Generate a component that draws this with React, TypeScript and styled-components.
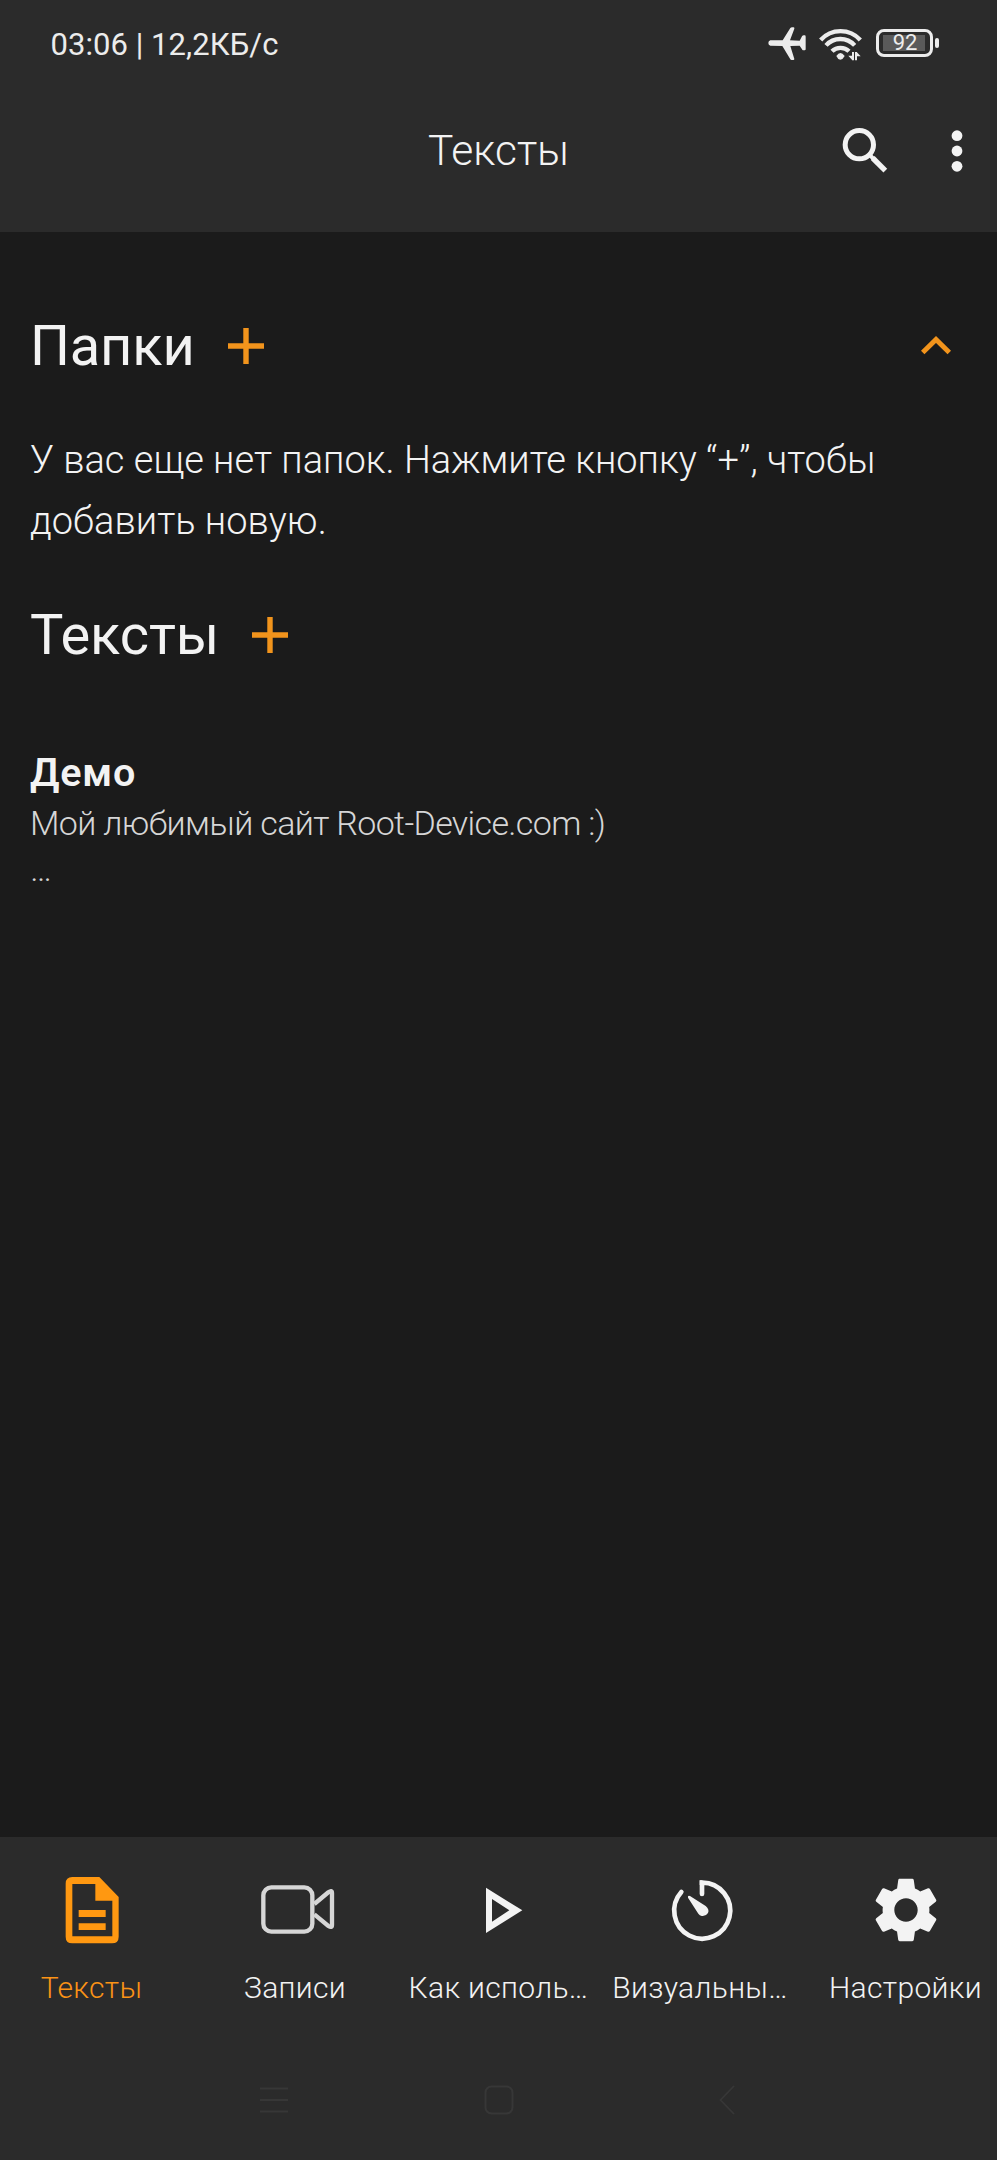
import React from 'react';
import styled, { createGlobalStyle } from 'styled-components';
import { MdSettings } from 'react-icons/md';

const color = {
  bar: '#2b2b2b',
  page: '#1b1b1b',
  text: '#f3f3f3',
  muted: '#d6d6d6',
  accent: '#fb9316',
  plus: '#f2941c',
  ghost: '#373737',
};

const GlobalStyle = createGlobalStyle`
  *, *::before, *::after { box-sizing: border-box; }
  body { margin: 0; background: ${color.page}; }
`;

const Screen = styled.div`
  width: 997px;
  height: 2160px;
  display: flex;
  flex-direction: column;
  overflow: hidden;
  background: ${color.page};
  color: ${color.text};
  font-family: Roboto, 'Noto Sans', sans-serif;
  svg { display: block; flex: none; }
`;

const Header = styled.header`
  flex: none;
  height: 232px;
  background: ${color.bar};
`;

const StatusBar = styled.div`
  height: 90px;
  padding: 0 58px 0 50.5px;
  display: flex;
  align-items: center;
  justify-content: space-between;
`;

const Clock = styled.span`
  font-size: 31px;
  line-height: 36px;
  letter-spacing: 0.06px;
  color: #ececec;
  white-space: nowrap;
`;

const StatusIcons = styled.div`
  display: flex;
  align-items: center;
  padding-bottom: 4px;
`;

const Connectivity = styled.div`
  display: flex;
  gap: 12px;
  padding-top: 1px;
`;

const Battery = styled.div`
  display: flex;
  align-items: center;
  gap: 2px;
  margin-left: 13px;
`;

const BatteryShell = styled.div`
  width: 57px;
  height: 28px;
  padding: 3px 4px;
  border: 3.5px solid #ececec;
  border-radius: 8px;
`;

const BatteryLevel = styled.div`
  height: 100%;
  width: 42px;
  background: #5a5a5a;
  display: flex;
  align-items: center;
  justify-content: center;
  font-size: 22px;
  line-height: 16px;
  color: #ececec;
  padding-left: 2px;
`;

const BatteryTip = styled.div`
  width: 4px;
  height: 10px;
  border-radius: 2px;
  background: #ececec;
`;

const TitleBar = styled.div`
  height: 121px;
  display: grid;
  grid-template-columns: 1fr auto 1fr;
  align-items: center;
`;

const Title = styled.h1`
  grid-column: 2;
  margin: 0;
  font-size: 42.5px;
  font-weight: 300;
  line-height: 50px;
`;

const Actions = styled.div`
  display: flex;
  justify-content: flex-end;
  align-items: center;
  gap: 63px;
  padding-right: 34.5px;
`;

const SearchButton = styled.div`
  padding-bottom: 2px;
`;

const Main = styled.main`
  flex: 1;
  padding: 58px 30px 0 30px;
`;

const SectionHead = styled.div`
  height: 112px;
  display: flex;
  align-items: center;
`;

const SectionTitle = styled.h2<{ $gap: number }>`
  margin: 0 ${p => p.$gap}px 0 0;
  font-size: 56px;
  font-weight: 400;
  line-height: 66px;
  letter-spacing: -0.15px;
`;

const CollapseButton = styled.div`
  margin-left: auto;
  margin-right: 16px;
`;

const Hint = styled.p`
  margin: 28px 0 28px;
  font-size: 38px;
  font-weight: 300;
  line-height: 60.5px;
  letter-spacing: 0.02px;
`;

const Note = styled.article`
  margin-top: 57px;
`;

const NoteTitle = styled.h3`
  margin: 0 0 2px;
  font-size: 39.5px;
  font-weight: 600;
  line-height: 50px;
  letter-spacing: 0.8px;
`;

const NoteText = styled.div`
  font-size: 34px;
  font-weight: 300;
  line-height: 46px;
  letter-spacing: -0.65px;
  color: ${color.muted};
`;

const TabBar = styled.nav`
  flex: none;
  height: 202px;
  background: ${color.bar};
  display: grid;
  grid-template-columns: repeat(5, 203.5px);
  justify-content: center;
`;

const Tab = styled.div<{ $active?: boolean }>`
  display: flex;
  flex-direction: column;
  align-items: center;
  padding-top: 28px;
  color: ${p => (p.$active ? color.accent : color.text)};
`;

const TabIcon = styled.div`
  width: 90px;
  height: 90px;
  display: flex;
  align-items: center;
  justify-content: center;
`;

const TabLabel = styled.span<{ $shift?: number }>`
  margin-top: 15px;
  font-size: 30px;
  font-weight: 300;
  line-height: 36px;
  letter-spacing: 0.35px;
  white-space: nowrap;
  padding-right: ${p => p.$shift ?? 0}px;
`;

const SystemBar = styled.div`
  flex: none;
  height: 121px;
  background: ${color.bar};
  display: flex;
  align-items: center;
  padding-left: 260px;
`;

const SystemKey = styled.div<{ $gap?: number }>`
  margin-right: ${p => p.$gap ?? 0}px;
`;

const Airplane = () => (
  <svg width="40" height="36" viewBox="80 77 120 108" fill="#ececec">
    <path d="M90 120H127L150 83Q152 81 155 81H160Q163 82 162 85L149 120L178 121L185 108Q187 105 190 105H194Q196 106 196 109V147Q196 150 193 150H188Q186 150 185 147L178 136L150 137L162 176Q162 179 159 179H154Q151 179 150 177L126 137L90 136Q84 134 84 128Q84 122 90 120Z" />
  </svg>
);

const Wifi = () => (
  <svg width="44" height="36" viewBox="238 77 132 108" fill="none" stroke="#ececec" strokeWidth="13">
    <path d="M243 119A80 80 0 0 1 362 119M259 135A58 58 0 0 1 345 135M277 153A36 36 0 0 1 328 153" />
    <path d="M290 167Q302 149 315 167Q310 177 302 178Q294 177 290 167Z" fill="#ececec" stroke="none" />
    <path d="M340 155V180M349 180V155" strokeWidth="6" />
    <path d="M326 166H338V180ZM363 168H351V155Z" fill="#ececec" stroke="none" />
  </svg>
);

const SearchIcon = () => (
  <svg width="46" height="46" viewBox="304 379 138 138" fill="none" stroke={color.text}>
    <circle cx="356" cy="432" r="42.5" strokeWidth="15" />
    <path d="M387 463L398 474" strokeWidth="12" />
    <path d="M396 472L434 510" strokeWidth="16" />
  </svg>
);

const MoreIcon = () => (
  <svg width="12" height="42" viewBox="0 0 12 42" fill={color.text}>
    <circle cx="6" cy="5.7" r="5.4" />
    <circle cx="6" cy="21" r="5.4" />
    <circle cx="6" cy="36.3" r="5.4" />
  </svg>
);

const PlusIcon = () => (
  <svg width="36" height="36" viewBox="0 0 36 36" stroke={color.plus} strokeWidth="5.4">
    <path d="M0 18H36M18 0V36" />
  </svg>
);

const ChevronUp = () => (
  <svg width="30" height="20" viewBox="0 0 30 20" fill="none" stroke={color.plus} strokeWidth="5">
    <path d="M1.7 16.5L15 3.5L28.3 16.5" />
  </svg>
);

const DocumentIcon = () => (
  <svg width="90" height="90" viewBox="140 135 270 270" fill="#ff9811">
    <path
      fillRule="evenodd"
      d="M216 171H297L355 231V350Q355 370 335 370H216Q196 370 196 350V191Q196 171 216 171ZM216 192V349H336V242H285V192Z"
    />
    <path d="M235 270H316V291H235ZM235 310H316V330H235Z" />
  </svg>
);

const VideoIcon = () => (
  <svg width="90" height="90" viewBox="751 135 270 270" fill="none" stroke="#d6d6d6" strokeWidth="13">
    <rect x="791" y="202" width="147" height="133" rx="24" />
    <path d="M944 252L986 217Q997 209 997 219V315Q997 325 986 318L944 283" />
  </svg>
);

const PlayIcon = () => (
  <svg width="90" height="90" viewBox="222 135 270 270" fill={color.text}>
    <path fillRule="evenodd" d="M318 203L427 271L318 339ZM336 237V305L388 271Z" />
  </svg>
);

const TimerIcon = () => (
  <svg width="90" height="90" viewBox="52 135 270 270" fill="none" stroke={color.text} strokeWidth="14">
    <path d="M125 216A84 84 0 1 0 187 188V222" strokeLinecap="round" />
    <path d="M180 181H188V195H180Z" fill={color.text} stroke="none" />
    <path d="M145 233Q143 226 151 228L198 258Q210 268 205 279Q198 290 186 288Q180 287 176 281Z" fill={color.text} stroke="none" />
  </svg>
);

const RecentKey = () => (
  <svg width="28" height="30" viewBox="0 0 28 30" stroke={color.ghost} strokeWidth="1.8">
    <path d="M0 3.5H28M0 15H28M0 26.5H28" />
  </svg>
);

const HomeKey = () => (
  <svg width="30" height="30" viewBox="0 0 30 30" fill="none" stroke={color.ghost} strokeWidth="2">
    <rect x="1.5" y="1.5" width="27" height="27" rx="6" />
  </svg>
);

const BackKey = () => (
  <svg width="16" height="30" viewBox="0 0 16 30" fill="none" stroke={color.ghost} strokeWidth="1.8">
    <path d="M15 1L1.5 15L15 29" />
  </svg>
);

export default function App() {
  return (
    <Screen>
      <GlobalStyle />
      <Header>
        <StatusBar>
          <Clock>03:06 | 12,2КБ/с</Clock>
          <StatusIcons>
            <Connectivity>
              <Airplane />
              <Wifi />
            </Connectivity>
            <Battery>
              <BatteryShell>
                <BatteryLevel>92</BatteryLevel>
              </BatteryShell>
              <BatteryTip />
            </Battery>
          </StatusIcons>
        </StatusBar>
        <TitleBar>
          <Title>Тексты</Title>
          <Actions>
            <SearchButton>
              <SearchIcon />
            </SearchButton>
            <MoreIcon />
          </Actions>
        </TitleBar>
      </Header>

      <Main>
        <SectionHead>
          <SectionTitle $gap={33}>Папки</SectionTitle>
          <PlusIcon />
          <CollapseButton>
            <ChevronUp />
          </CollapseButton>
        </SectionHead>
        <Hint>
          У вас еще нет папок. Нажмите кнопку “+”, чтобы
          <br />
          добавить новую.
        </Hint>
        <SectionHead>
          <SectionTitle $gap={32.5}>Тексты</SectionTitle>
          <PlusIcon />
        </SectionHead>
        <Note>
          <NoteTitle>Демо</NoteTitle>
          <NoteText>Мой любимый сайт Root-Device.com :)</NoteText>
          <NoteText>…</NoteText>
        </Note>
      </Main>

      <TabBar>
        <Tab $active>
          <TabIcon><DocumentIcon /></TabIcon>
          <TabLabel>Тексты</TabLabel>
        </Tab>
        <Tab>
          <TabIcon><VideoIcon /></TabIcon>
          <TabLabel>Записи</TabLabel>
        </Tab>
        <Tab>
          <TabIcon><PlayIcon /></TabIcon>
          <TabLabel>Как исполь…</TabLabel>
        </Tab>
        <Tab>
          <TabIcon><TimerIcon /></TabIcon>
          <TabLabel $shift={4}>Визуальны…</TabLabel>
        </Tab>
        <Tab>
          <TabIcon><MdSettings size={78} /></TabIcon>
          <TabLabel>Настройки</TabLabel>
        </Tab>
      </TabBar>

      <SystemBar>
        <SystemKey $gap={195.5}><RecentKey /></SystemKey>
        <SystemKey $gap={205}><HomeKey /></SystemKey>
        <SystemKey><BackKey /></SystemKey>
      </SystemBar>
    </Screen>
  );
}
